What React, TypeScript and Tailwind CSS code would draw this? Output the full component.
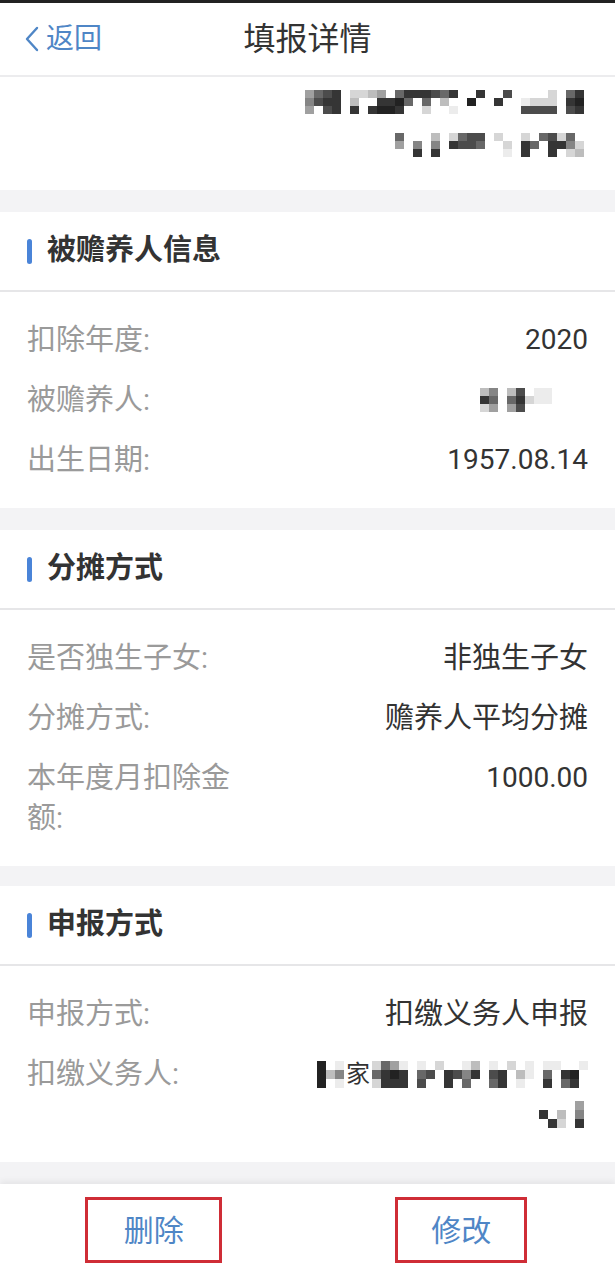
import { ReactNode } from "react";

const shade: Record<string, string> = {
  ".": "bg-transparent",
  "1": "bg-[#ececec]",
  "2": "bg-[#d6d6d6]",
  "3": "bg-[#bdbdbd]",
  "4": "bg-[#a0a0a0]",
  "5": "bg-[#858585]",
  "6": "bg-[#686868]",
  "7": "bg-[#4c4c4c]",
  "8": "bg-[#353535]",
  "9": "bg-[#222222]",
};

function Mosaic({ rows, cell }: { rows: string[]; cell: string }) {
  return (
    <div className="flex flex-col blur-[0.6px]">
      {rows.map((r, i) => (
        <div key={i} className="flex">
          {r.split("").map((c, j) => (
            <span key={j} className={`${cell} ${shade[c]}`} />
          ))}
        </div>
      ))}
    </div>
  );
}

function SectionTitle({ title }: { title: string }) {
  return (
    <div className="flex h-[80px] items-center gap-[15px] border-b-2 border-[#e6e6e8] bg-white pl-[27px]">
      <span className="h-[25px] w-[5px] rounded-full bg-[#4a84d8]" />
      <span className="text-[29px] font-bold text-[#333]">{title}</span>
    </div>
  );
}

function Row({ label, children }: { label: string; children: ReactNode }) {
  // chinese values read a touch wider than the digits
  const cjk = typeof children === "string" && /[\u4e00-\u9fff]/.test(children);
  return (
    <div className="flex justify-between">
      <div className="w-[215px] text-[29px] leading-[40px] text-[#9a9a9a]">{label}</div>
      <div
        className={`flex flex-col items-end text-right leading-[40px] text-[#333] ${cjk ? "text-[29px]" : "text-[28px]"}`}
      >
        {children}
      </div>
    </div>
  );
}

function Rows({ children }: { children: ReactNode }) {
  return <div className="flex flex-col gap-[20px] bg-white px-[27px] py-[28px]">{children}</div>;
}

export default function App() {
  return (
    <div className="flex min-h-[1280px] w-full flex-col bg-[#f3f3f5] font-['Roboto','Noto_Sans_CJK_SC',sans-serif]">
      <div className="h-[3px] bg-[#222]" />
      <header className="grid h-[74px] grid-cols-3 items-center border-b-2 border-[#ececee] bg-white">
        <div className="flex items-center gap-[6px] pl-[24px] text-[28px] text-[#4f86c6]">
          <svg width="16" height="28" viewBox="0 0 16 28" fill="none">
            <polyline points="13,3 3,14 13,25" stroke="#4f86c6" strokeWidth="2.4" strokeLinecap="round" strokeLinejoin="round" />
          </svg>
          <span>返回</span>
        </div>
        <div className="text-center text-[32px] text-[#333]">填报详情</div>
        <div />
      </header>

      <div className="flex h-[113px] flex-col items-end gap-[19px] bg-white pr-[31px] pt-[13px]">
        <Mosaic
          cell="w-[9px] h-[8px]"
          rows={["4678.2234.6888768..8..7....2.68", "5788.3..8896.6.3..9..8..1222.89", "4.78.8.8998..2..1.......7777.78"]}
        />
        <Mosaic cell="w-[9px] h-[8px]" rows={["6...3.2677.2..2.6726.", "4.5.5.8776..2.86.8852", "..8.8.......1.8..8.23"]} />
      </div>

      <div className="h-[22px]" />
      <SectionTitle title="被赡养人信息" />
      <Rows>
        <Row label="扣除年度:">2020</Row>
        <Row label="被赡养人:">
          <div className="flex h-[40px] items-center pr-[36px]">
            <Mosaic cell="w-[9px] h-[8px]" rows={["35.37.11", "86.68211", "24.47..."]} />
          </div>
        </Row>
        <Row label="出生日期:">1957.08.14</Row>
      </Rows>

      <div className="h-[22px]" />
      <SectionTitle title="分摊方式" />
      <Rows>
        <Row label="是否独生子女:">非独生子女</Row>
        <Row label="分摊方式:">赡养人平均分摊</Row>
        <Row label="本年度月扣除金额:">1000.00</Row>
      </Rows>

      <div className="h-[20px]" />
      <SectionTitle title="申报方式" />
      <Rows>
        <Row label="申报方式:">扣缴义务人申报</Row>
        <Row label="扣缴义务人:">
          <div className="flex h-[40px] items-center">
            <Mosaic cell="w-[9px] h-[9px]" rows={["9.1", "935", "9.1"]} />
            <span className="mx-[2px] text-[24px] text-[#333]">家</span>
            <Mosaic
              cell="w-[9px] h-[9px]"
              rows={["2641.1.2..13.1.2.1.11..1", "6898.67.8758.78.31.6.89.", "2888.7..8.6..68.1..8.68."]}
            />
          </div>
          <div className="flex h-[40px] items-center pr-[4px]">
            <Mosaic cell="w-[9px] h-[9px]" rows={["....4", "8.3.5", ".82.8"]} />
          </div>
        </Row>
      </Rows>

      <div className="h-[22px]" />
      <div className="grid h-[96px] grid-cols-2 bg-white pt-[13px] shadow-[0_-3px_6px_rgba(0,0,0,0.06)]">
        <div className="flex justify-center">
          <button className="h-[66px] w-[137px] border-[3px] border-[#cf2d36] text-[30px] text-[#4f86c6]">删除</button>
        </div>
        <div className="flex justify-center">
          <button className="h-[66px] w-[132px] border-[3px] border-[#cf2d36] text-[30px] text-[#4f86c6]">修改</button>
        </div>
      </div>
    </div>
  );
}
